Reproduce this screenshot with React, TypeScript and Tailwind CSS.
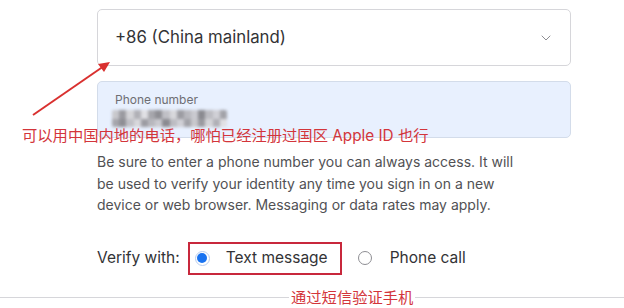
import { ChevronDown } from "lucide-react";

const blur = [
    "#c8c8cc", "#9a9aa0", "#d4d4d8", "#b0b0b6", "#e0e0e4", "#a6a6ac", "#8e8e94", "#c0c0c6",
    "#d8d8dc", "#9c9ca2", "#b8b8be", "#cacad0", "#8a8a90", "#bcbcc2", "#d0d0d6", "#a2a2a8",
];

const BlurredNumber = () => (
    <div className="mt-[3px] ml-[-3px] flex h-[17px] w-[115px] overflow-hidden rounded-[2px] blur-[1.5px]">
        {blur.map((c, i) => (
            <div key={i} className="flex flex-1 flex-col">
                <div className="flex-1" style={{ background: c }} />
                <div className="flex-1" style={{ background: blur[(i + 5) % blur.length] }} />
            </div>
        ))}
    </div>
);

const Radio = ({ checked }: { checked?: boolean }) =>
    checked ? (
        <span className="flex h-[15px] w-[15px] items-center justify-center rounded-full border border-[#b9cdee] bg-white">
            <span className="h-[10px] w-[10px] rounded-full bg-[#1a73f0]" />
        </span>
    ) : (
        <span className="h-[14px] w-[14px] rounded-full border border-[#8e8e93] bg-white" />
    );

export default function App() {
    return (
        <div className="relative h-[308px] w-[624px] overflow-hidden bg-white font-['Inter','Noto_Sans_CJK_SC',sans-serif] text-[#333336]">
            <div className="ml-[97px] w-[474px] pt-[9px]">
                <div className="flex h-[57px] items-center justify-between rounded-[5px] border border-[#d6d6da] pl-[17px] pr-[16px]">
                    <span className="text-[16.8px]">+86 (China mainland)</span>
                    <ChevronDown className="h-[16px] w-[16px] text-[#8e8e93]" strokeWidth={1.5} />
                </div>
                <div className="mt-[15px] h-[57px] rounded-[5px] border border-[#d3dcea] bg-[#e8f0fe] pl-[17px] pt-[10px]">
                    <div className="text-[12px] leading-[15px] text-[#6e6e73]">Phone number</div>
                    <BlurredNumber />
                </div>
                <p className="mt-[13px] w-[418px] text-[14px] leading-[21.5px] text-[#515154]">
                    Be sure to enter a phone number you can always access. It will be used to verify your identity any time you sign in on a new device or web browser. Messaging or data rates may apply.
                </p>
                <div className="mt-[26px] flex items-center text-[15.5px]">
                    <span>Verify with:</span>
                    <label className="ml-[8px] flex h-[33px] items-center border-2 border-[#c8283c] pl-[5px] pr-[12px]">
                        <Radio checked />
                        <span className="ml-[16px]">Text message</span>
                    </label>
                    <label className="ml-[16px] flex items-center">
                        <Radio />
                        <span className="ml-[18px]">Phone call</span>
                    </label>
                </div>
            </div>
            <div className="absolute left-0 right-0 top-[297px] border-t border-[#d6d6da]" />

            <svg className="absolute left-0 top-0" width="624" height="308">
                <line x1="33" y1="115" x2="104" y2="66" stroke="#d9302f" strokeWidth="2" />
                <polygon points="110,62 98,64 104,72" fill="#d9302f" />
            </svg>
            <div className="absolute left-[22px] top-[126px] text-[15.3px] leading-[20px] text-[#d3353b]">
                可以用中国内地的电话，哪怕已经注册过国区 Apple ID 也行
            </div>
            <div className="absolute left-[289px] top-[288px] bg-white px-[2px] text-[15.3px] leading-[20px] text-[#d3353b]">
                通过短信验证手机
            </div>
        </div>
    );
}
